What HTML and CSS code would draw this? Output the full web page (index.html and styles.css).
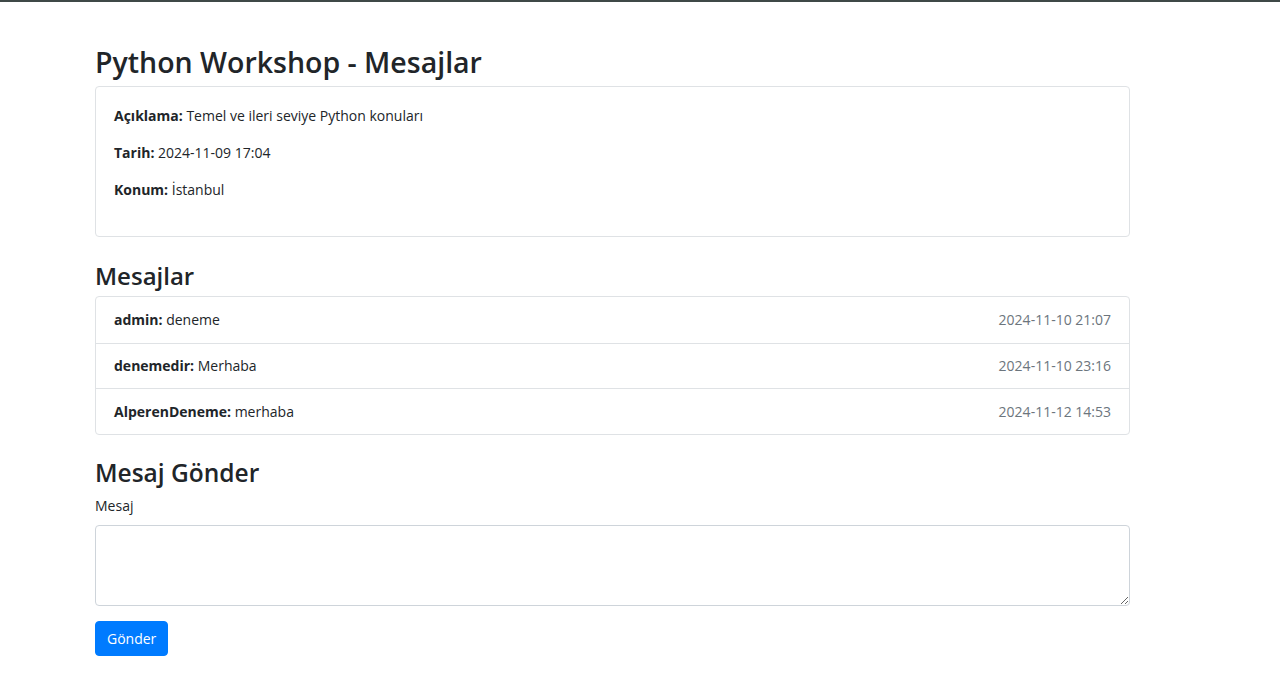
FILE: index.html
```html
<!DOCTYPE html>
<html lang="tr">
<head>
<meta charset="utf-8">
<title>Python Workshop - Mesajlar</title>
<link rel="stylesheet" href="styles.css">
</head>
<body>
<div class="topline"></div>
<main class="container">
  <h2 class="title">Python Workshop - Mesajlar</h2>
  <section class="card">
    <p><strong>Açıklama:</strong> Temel ve ileri seviye Python konuları</p>
    <p><strong>Tarih:</strong> 2024-11-09 17:04</p>
    <p><strong>Konum:</strong> İstanbul</p>
  </section>

  <h3 class="section-title">Mesajlar</h3>
  <ul class="list">
    <li class="item"><span><strong>admin:</strong> deneme</span><span class="muted">2024-11-10 21:07</span></li>
    <li class="item"><span><strong>denemedir:</strong> Merhaba</span><span class="muted">2024-11-10 23:16</span></li>
    <li class="item"><span><strong>AlperenDeneme:</strong> merhaba</span><span class="muted">2024-11-12 14:53</span></li>
  </ul>

  <h3 class="section-title send">Mesaj Gönder</h3>
  <form class="form">
    <label class="label" for="msg">Mesaj</label>
    <textarea id="msg" class="textarea"></textarea>
    <button type="button" class="btn">Gönder</button>
  </form>
</main>
</body>
</html>
```
FILE: styles.css
```css
* { box-sizing: border-box; }
html, body { margin: 0; padding: 0; background: #fff; }
body {
  font-family: "Open Sans", "Noto Sans", sans-serif;
  font-size: 14px;
  color: #212529;
}
.topline { height: 2px; background: #3f4947; }
.container {
  width: 1035px;
  margin-left: 95px;
  padding-top: 42px;
}
.title {
  font-size: 28.5px;
  font-weight: 600;
  margin: 0 0 6px;
  line-height: 36px;
}
.card {
  border: 1px solid #dfe2e5;
  border-radius: 4px;
  padding: 18px 18px 18px;
  height: 151px;
}
.card p { margin: 0 0 15px; line-height: 22px; }
.card strong { font-weight: 700; }
.section-title {
  font-size: 24px;
  font-weight: 600;
  line-height: 32px;
  margin: 23px 0 4px;
}
.list {
  list-style: none;
  margin: 0;
  padding: 0;
  border: 1px solid #dfe2e5;
  border-radius: 4px;
}
.item {
  display: flex;
  justify-content: space-between;
  align-items: center;
  height: 45.5px;
  padding: 0 18px;
  border-top: 1px solid #dfe2e5;
}
.item:first-child { border-top: 0; }
.muted { color: #6c757d; }
.section-title.send { margin-top: 22px; margin-bottom: 6px; font-size: 24.5px; }
.form { display: flex; flex-direction: column; align-items: flex-start; }
.label { line-height: 22px; margin-bottom: 8px; }
.textarea {
  width: 100%;
  height: 81px;
  border: 1px solid #ced4da;
  border-radius: 4px;
  font-family: inherit;
  font-size: 14px;
  resize: vertical;
  margin-bottom: 15px;
}
.btn {
  background: #007bff;
  color: #fff;
  border: 1px solid #007bff;
  border-radius: 4px;
  font-family: inherit;
  font-size: 14px;
  height: 35px;
  padding: 0 11px;
  cursor: pointer;
}
```
